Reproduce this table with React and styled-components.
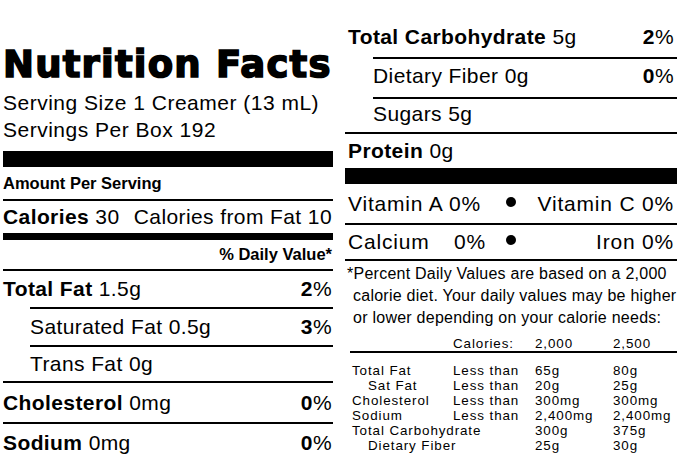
import styled, { createGlobalStyle } from "styled-components";

const Global = createGlobalStyle`
  * { box-sizing: border-box; }
  body {
    margin: 0;
    background: #fff;
    color: #000;
    font-family: "Liberation Sans", Arial, sans-serif;
  }
`;

const Label = styled.div`
  display: flex;
  gap: 12px;
  width: 700px;
  height: 462px;
  padding-left: 3px;
  overflow: hidden;
`;

const Column = styled.div`
  width: ${(p) => p.$w}px;
  padding-top: ${(p) => p.$top}px;
  display: flex;
  flex-direction: column;
`;

const Title = styled.h1`
  margin: 0;
  font-family: "DejaVu Sans", sans-serif;
  font-weight: 900;
  font-size: 37px;
  line-height: 37px;
  letter-spacing: 1.2px;
  -webkit-text-stroke: 1.6px #000;
  white-space: nowrap;
`;

const Serving = styled.div`
  margin-top: 6px;
  margin-bottom: 8px;
  font-size: 21px;
  line-height: 27px;
  letter-spacing: 0.5px;
`;

const Bar = styled.div`
  height: ${(p) => p.$h}px;
  background: #000;
  flex: none;
`;

const Row = styled.div`
  display: flex;
  justify-content: space-between;
  align-items: center;
  flex: none;
  height: ${(p) => p.$h}px;
  margin-left: ${(p) => (p.$indent ? p.$indent : 0)}px;
  padding: 0 ${(p) => p.$pr ?? 1}px ${(p) => p.$pb ?? 0}px ${(p) => p.$pl ?? 0}px;
  border-top: ${(p) => p.$rule ?? 0}px solid #000;
  font-size: 21px;
  letter-spacing: 0.4px;
  white-space: nowrap;
`;

const Small = styled.span`
  font-weight: 700;
  font-size: 16.5px;
  letter-spacing: 0;
  margin-left: ${(p) => (p.$right ? "auto" : 0)};
`;

const VitRow = styled.div`
  display: grid;
  grid-template-columns: 150px 26px 1fr;
  align-items: center;
  flex: none;
  height: ${(p) => p.$h}px;
  padding: 0 3px;
  border-top: ${(p) => p.$rule ?? 0}px solid #000;
  font-size: 21px;
  letter-spacing: 0.8px;
  white-space: nowrap;
`;

const VitLeft = styled.div`
  display: flex;
  justify-content: space-between;
  padding-right: 12px;
`;

const VitRight = styled.div`
  text-align: right;
`;

const Dot = styled.span`
  justify-self: center;
  width: 10px;
  height: 10px;
  border-radius: 50%;
  background: #000;
  margin-top: -4px;
`;

const Foot = styled.p`
  margin: 0;
  padding: 2px 0 0 8px;
  text-indent: -6px;
  font-size: 16px;
  line-height: 22px;
  letter-spacing: 0.25px;
  border-top: 2px solid #000;
`;

const Table = styled.div`
  display: grid;
  grid-template-columns: 101px 82px 78px 1fr;
  margin-top: ${(p) => p.$top ?? 0}px;
  margin-left: ${(p) => (p.$rule ? 5 : 0)}px;
  padding-left: ${(p) => (p.$rule ? 2 : 7)}px;
  border-bottom: ${(p) => p.$rule ?? 0}px solid #000;
  font-size: 13.4px;
  line-height: 15px;
  letter-spacing: 0.9px;
  white-space: nowrap;
`;

const Cell = styled.span`
  padding-left: ${(p) => (p.$sub ? 16 : 0)}px;
`;

const nutrients = [
  ["Total Fat", "Less than", "65g", "80g"],
  ["Sat Fat", "Less than", "20g", "25g", true],
  ["Cholesterol", "Less than", "300mg", "300mg"],
  ["Sodium", "Less than", "2,400mg", "2,400mg"],
  ["Total Carbohydrate", "", "300g", "375g"],
  ["Dietary Fiber", "", "25g", "30g", true],
];

export default function App() {
  return (
    <>
      <Global />
      <Label>
        <Column $w={330} $top={46}>
          <Title>Nutrition Facts</Title>
          <Serving>
            Serving Size 1 Creamer (13 mL)
            <br />
            Servings Per Box 192
          </Serving>
          <Bar $h={16} />
          <Row $h={32}>
            <Small>Amount Per Serving</Small>
          </Row>
          <Row $h={34} $rule={2}>
            <span>
              <b>Calories</b> 30
            </span>
            <span>Calories from Fat 10</span>
          </Row>
          <Row $h={36} $rule={7}>
            <Small $right>% Daily Value*</Small>
          </Row>
          <Row $h={38} $rule={2}>
            <span>
              <b>Total Fat</b> 1.5g
            </span>
            <span>
              <b>2</b>%
            </span>
          </Row>
          <Row $h={38} $rule={2} $indent={27}>
            <span>Saturated Fat 0.5g</span>
            <span>
              <b>3</b>%
            </span>
          </Row>
          <Row $h={36} $rule={2} $indent={27}>
            <span>Trans Fat 0g</span>
          </Row>
          <Row $h={41} $rule={2}>
            <span>
              <b>Cholesterol</b> 0mg
            </span>
            <span>
              <b>0</b>%
            </span>
          </Row>
          <Row $h={40} $rule={2}>
            <span>
              <b>Sodium</b> 0mg
            </span>
            <span>
              <b>0</b>%
            </span>
          </Row>
        </Column>

        <Column $w={332} $top={16}>
          <Row $h={41} $pl={3} $pr={3}>
            <span>
              <b>Total Carbohydrate</b> 5g
            </span>
            <span>
              <b>2</b>%
            </span>
          </Row>
          <Row $h={40} $rule={2} $indent={28} $pr={3} $pb={4}>
            <span>Dietary Fiber 0g</span>
            <span>
              <b>0</b>%
            </span>
          </Row>
          <Row $h={35} $rule={2} $indent={28} $pr={3} $pb={4}>
            <span>Sugars 5g</span>
          </Row>
          <Row $h={36} $rule={2} $pl={3} $pr={3}>
            <span>
              <b>Protein</b> 0g
            </span>
          </Row>
          <Bar $h={16} />
          <VitRow $h={39}>
            <VitLeft>
              <span>Vitamin A 0%</span>
            </VitLeft>
            <Dot />
            <VitRight>Vitamin C 0%</VitRight>
          </VitRow>
          <VitRow $h={36} $rule={2}>
            <VitLeft>
              <span>Calcium</span>
              <span>0%</span>
            </VitLeft>
            <Dot />
            <VitRight>Iron 0%</VitRight>
          </VitRow>
          <Foot>
            *Percent Daily Values are based on a 2,000
            <br />
            calorie diet. Your daily values may be higher
            <br />
            or lower depending on your calorie needs:
          </Foot>
          <Table $top={7} $rule={2}>
            <span />
            <span>Calories:</span>
            <span>2,000</span>
            <span>2,500</span>
          </Table>
          <Table $top={10}>
            {nutrients.map(([name, limit, a, b, sub]) => (
              <>
                <Cell key={name} $sub={sub}>
                  {name}
                </Cell>
                <span>{limit}</span>
                <span>{a}</span>
                <span>{b}</span>
              </>
            ))}
          </Table>
        </Column>
      </Label>
    </>
  );
}
